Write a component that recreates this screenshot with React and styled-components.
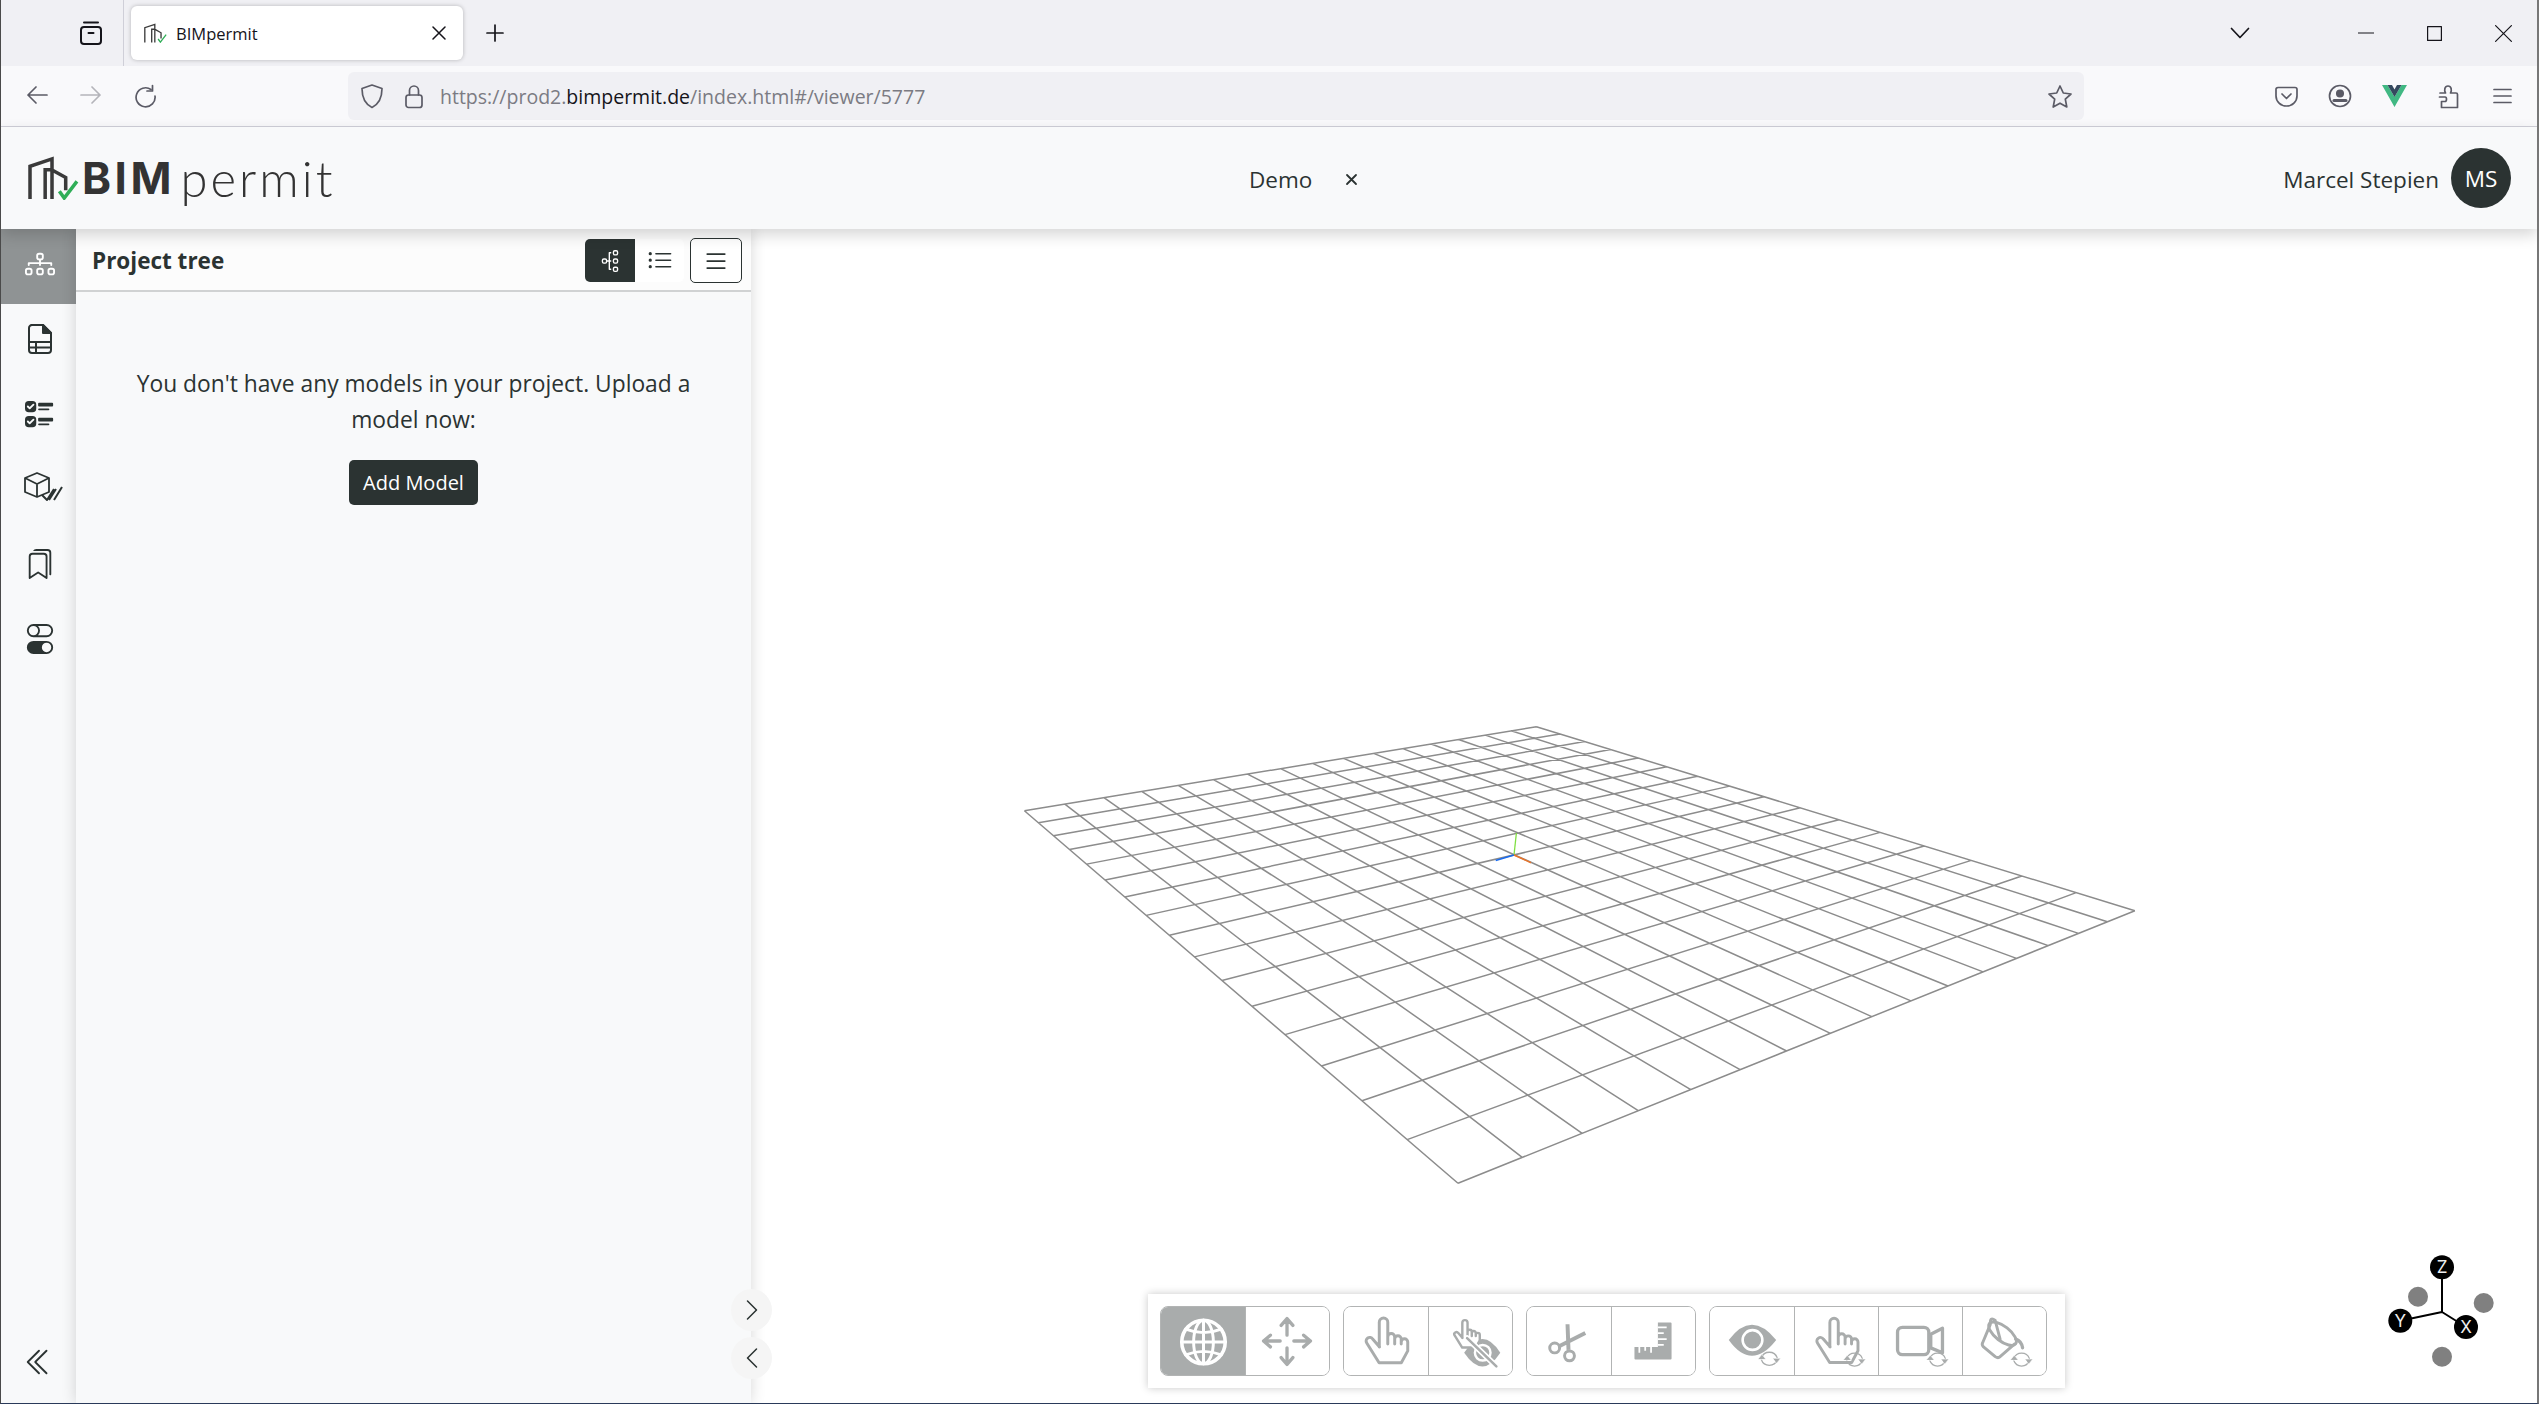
import React from "react";
import styled, { createGlobalStyle } from "styled-components";
import {
  BsDiagram3,
  BsUiChecks,
  BsBookmarks,
  BsToggles,
  BsListUl,
  BsList,
  BsChevronLeft,
  BsChevronRight,
  BsChevronDoubleLeft,
} from "react-icons/bs";

const GlobalStyle = createGlobalStyle`
  html, body {
    margin: 0;
    padding: 0;
    height: 100%;
    overflow: hidden;
    background: #2a3a5a;
  }
  * { box-sizing: border-box; }
`;

const DARK = "#2b3332";
const TOOL = "#a9acac";
const UI_FONT = `"Open Sans", "Noto Sans", sans-serif`;

const Frame = styled.div`
  width: 2539px;
  height: 1404px;
  display: flex;
  flex-direction: column;
  border-left: 1px solid #4a4a4a;
  border-right: 2px solid #777;
  border-bottom: 1px solid #2a3a5a;
  background: #fff;
  font-family: ${UI_FONT};
  color: ${DARK};
  overflow: hidden;
`;

/* browser chrome */
const TabStrip = styled.div`
  height: 66px;
  flex: none;
  display: flex;
  align-items: center;
  background: #f0f0f4;
  color: #15141a;
`;

const ViewSlot = styled.div`
  width: 123px;
  height: 66px;
  padding-left: 77px;
  display: flex;
  align-items: center;
  border-right: 1px solid #cfcfd8;
`;

const Tab = styled.div`
  width: 332px;
  height: 54px;
  margin-left: 7px;
  padding: 0 17px 0 12px;
  display: flex;
  align-items: center;
  background: #fff;
  border-radius: 6px;
  box-shadow: 0 0 4px rgba(0, 0, 0, 0.25);
  font-size: 16.5px;
`;

const TabTitle = styled.span`
  flex: 1;
  margin-left: 9px;
`;

const NewTab = styled.div`
  margin-left: 23px;
  display: flex;
`;

const Controls = styled.div`
  margin-left: auto;
  display: flex;
  align-items: center;
  padding-right: 25px;
`;

const Slot = styled.div`
  margin-left: ${(p) => p.$gap}px;
  display: flex;
`;

const NavBar = styled.div`
  height: 61px;
  flex: none;
  display: flex;
  align-items: center;
  background: #f9f9fb;
  border-bottom: 1px solid #cfcfd8;
`;

const NavIcons = styled.div`
  width: 347px;
  padding-left: 25px;
  display: flex;
  gap: 32px;
  color: #5b5b66;
`;

const UrlBar = styled.div`
  width: 1736px;
  height: 48px;
  padding: 0 11px 0 12px;
  display: flex;
  align-items: center;
  background: #f0f0f4;
  border-radius: 6px;
  color: #5b5b66;
`;

const UrlText = styled.div`
  flex: 1;
  margin-left: 16px;
  font-size: 19.5px;
  color: #7b7b83;
  b {
    font-weight: 400;
    color: #15141a;
  }
`;

const Addons = styled.div`
  flex: 1;
  display: flex;
  align-items: center;
  padding-left: 191px;
  gap: 30px;
  color: #5b5b66;
`;

/* app header */
const Header = styled.header`
  height: 102px;
  flex: none;
  display: grid;
  grid-template-columns: 1223px auto 1fr;
  align-items: center;
  padding: 0 26px 0 25px;
  background: #f8f9fa;
  box-shadow: 0 6px 14px rgba(0, 0, 0, 0.16);
  position: relative;
  z-index: 3;
`;

const Logo = styled.div`
  display: flex;
  align-items: center;
`;

const LogoBold = styled.span`
  margin-left: 3px;
  font-family: Inter, sans-serif;
  font-weight: 700;
  font-size: 44px;
  letter-spacing: 3.5px;
  color: #333;
`;

const LogoLight = styled.span`
  margin-left: 5.5px;
  font-family: Lato, sans-serif;
  font-weight: 300;
  font-size: 49px;
  letter-spacing: 3px;
  color: #333;
`;

const ProjectTag = styled.div`
  display: flex;
  align-items: center;
  gap: 33px;
  font-size: 22.5px;
  padding-top: 2px;
`;

const UserBox = styled.div`
  display: flex;
  justify-content: flex-end;
  align-items: center;
  gap: 12px;
  font-size: 22.5px;
`;

const UserName = styled.span`
  padding-top: 2px;
`;

const Avatar = styled.div`
  width: 60px;
  height: 60px;
  display: flex;
  align-items: center;
  justify-content: center;
  border-radius: 50%;
  background: ${DARK};
  color: #fff;
`;

/* app body */
const Main = styled.main`
  flex: 1;
  min-height: 0;
  display: flex;
`;

const Sidebar = styled.nav`
  width: 75px;
  flex: none;
  display: flex;
  flex-direction: column;
  padding-bottom: 4px;
  background: #f8f9fa;
`;

const SideItem = styled.div`
  height: 75px;
  flex: none;
  display: flex;
  align-items: center;
  justify-content: center;
  padding: 0 0 5px 3px;
  background: ${(p) => (p.$active ? "#8f9394" : "transparent")};
  color: ${(p) => (p.$active ? "#fff" : DARK)};
`;

const CollapseItem = styled.div`
  height: 75px;
  flex: none;
  margin-top: auto;
  display: flex;
  align-items: center;
  justify-content: center;
  color: ${DARK};
`;

const Panel = styled.section`
  width: 675px;
  flex: none;
  display: flex;
  flex-direction: column;
  background: #f8f9fa;
  box-shadow: 0 0 14px rgba(0, 0, 0, 0.16);
  position: relative;
  z-index: 2;
`;

const PanelHead = styled.div`
  height: 63px;
  flex: none;
  display: flex;
  align-items: center;
  padding: 2px 9px 0 16px;
  background: #fcfcfc;
  border-bottom: 2px solid #d0d2d3;
`;

const PanelTitle = styled.h2`
  flex: 1;
  margin: 0;
  font-size: 22.5px;
  font-weight: 700;
`;

const ViewSwitch = styled.div`
  display: flex;
  margin-right: 6px;
`;

const SwitchBtn = styled.button`
  width: ${(p) => (p.$active ? "50px" : "49px")};
  height: 43px;
  padding: 0;
  display: flex;
  align-items: center;
  justify-content: center;
  border: 0;
  border-radius: ${(p) => (p.$active ? "5px 0 0 5px" : "0 5px 5px 0")};
  background: ${(p) => (p.$active ? DARK : "#fff")};
  color: ${(p) => (p.$active ? "#fff" : DARK)};
`;

const RotatedIcon = styled.span`
  display: flex;
  transform: rotate(-90deg);
`;

const MenuBtn = styled.button`
  width: 52px;
  height: 45px;
  padding: 0;
  display: flex;
  align-items: center;
  justify-content: center;
  border: 1px solid ${DARK};
  border-radius: 5px;
  background: #fff;
  color: ${DARK};
`;

const PanelBody = styled.div`
  flex: 1;
  padding: 74px 56px 0;
  display: flex;
  flex-direction: column;
  align-items: center;
  text-align: center;
  font-size: 22.8px;
  line-height: 36px;
`;

const AddButton = styled.button`
  width: 129px;
  height: 45px;
  margin-top: 22px;
  padding: 0;
  border: 0;
  border-radius: 5px;
  background: ${DARK};
  color: #fff;
  font-family: inherit;
  font-size: 20px;
`;

const PanelToggles = styled.div`
  position: absolute;
  right: -21px;
  bottom: 24px;
  display: flex;
  flex-direction: column;
  gap: 6px;
`;

const RoundBtn = styled.button`
  width: 41px;
  height: 42px;
  padding: 0;
  display: flex;
  align-items: center;
  justify-content: center;
  border: 0;
  border-radius: 50%;
  background: #f5f5f5;
  color: ${DARK};
`;

const Viewer = styled.div`
  flex: 1;
  min-width: 0;
  position: relative;
  background: #fff;
  overflow: hidden;
`;

const SceneSvg = styled.svg`
  display: block;
`;

const ToolDock = styled.div`
  position: absolute;
  left: 397px;
  bottom: 15px;
  display: flex;
  gap: 13px;
  padding: 12px 18px 12px 12px;
  background: #fff;
  box-shadow: 0 0 8px rgba(0, 0, 0, 0.22);
`;

const ToolGroup = styled.div`
  display: flex;
  height: 70px;
  border: 1px solid #b2b4b4;
  border-radius: 8px;
  overflow: hidden;
`;

const ToolBtn = styled.div`
  width: 84px;
  height: 100%;
  display: flex;
  justify-content: center;
  background: ${(p) => (p.$active ? TOOL : "#fff")};
  color: ${(p) => (p.$active ? "#fff" : TOOL)};
  & + & {
    border-left: 1px solid #b2b4b4;
  }
`;

const GizmoBox = styled.svg`
  position: absolute;
  right: 32px;
  bottom: 31px;
`;

/* ---- drawings ---- */

function BuildingMark({ height = 44, check = "#2fae57", stroke = 3.6 }) {
  return (
    <svg width={(height * 53) / 44} height={height} viewBox="26 151 54 45">
      <path
        d="M30 195V161.5L52.5 154V195M45.5 195V165H52.5M53 165.5L66.5 173V186"
        fill="none"
        stroke="#3a3a3a"
        strokeWidth={stroke}
      />
      <path d="M60 187L65 194L78 177" fill="none" stroke={check} strokeWidth={stroke} />
    </svg>
  );
}

const line = { fill: "none", stroke: "currentColor", strokeLinecap: "round", strokeLinejoin: "round" };

function Glyph({ w, h, sw = 1.7, children }) {
  return (
    <svg width={w} height={h} viewBox={`0 0 ${w} ${h}`} {...line} strokeWidth={sw}>
      {children}
    </svg>
  );
}

const HAND =
  "M36 40L29 32a3.6 3.6 0 0 0-6 4L35.5 56H58L64.5 44V35a3.3 3.3 0 0 0-6.6 0V37M57.9 35V32a3.3 3.3 0 0 0-6.6 0V37M51.3 32V30a3.3 3.3 0 0 0-7 0V37M44.3 30V15a4.3 4.3 0 0 0-8.6 0V40";

function Sync({ x = 61, y = 53 }) {
  return (
    <g transform={`translate(${x} ${y})`}>
      <path d="M-8 -1A8.5 8.5 0 0 1 8 -1M8 1A8.5 8.5 0 0 1-8 1" fill="none" stroke="currentColor" strokeWidth="1.3" />
      <path d="M-11.5 0.5L-7.5 -4.5L-3.5 0.5ZM3.5 -0.5L11.5 -0.5L7.5 4.5Z" fill="currentColor" stroke="#fff" strokeWidth="0.6" />
    </g>
  );
}

function ToolIcon({ children }) {
  return (
    <svg width="85" height="70" viewBox="0 0 85 70" fill="none" stroke="currentColor" strokeWidth="3" strokeLinecap="round" strokeLinejoin="round">
      {children}
    </svg>
  );
}

const GlobeIcon = () => (
  <ToolIcon>
    <circle cx="43" cy="35" r="22" strokeWidth="3.6" />
    <ellipse cx="43" cy="35" rx="10" ry="22" strokeWidth="3" />
    <path d="M43 13V57M21 35H65M25 22Q43 29 61 22M25 48Q43 41 61 48" strokeWidth="3" />
  </ToolIcon>
);

const MoveIcon = () => (
  <ToolIcon>
    <path d="M42 12V28M36 18L42 11L48 18M42 41V57M36 51L42 58L48 51M18 34H35M25 28L18 34L25 40M49 34H66M59 28L66 34L59 40" strokeWidth="3.4" />
  </ToolIcon>
);

const HandIcon = () => (
  <ToolIcon>
    <path d={HAND} />
  </ToolIcon>
);

const HandHideIcon = () => (
  <ToolIcon>
    <path d="M36 46Q55 18 73 46Q55 74 36 46Z" fill="currentColor" stroke="none" />
    <circle cx="55" cy="46" r="8" fill="none" stroke="#fff" strokeWidth="2.5" />
    <g transform="translate(12 6) scale(.62)">
      <path d={HAND} strokeWidth="4" fill="#fff" />
    </g>
    <path d="M39 31L69 60" stroke="#fff" strokeWidth="6" />
    <path d="M39 31L69 60" strokeWidth="2.6" />
  </ToolIcon>
);

const ScissorsIcon = () => (
  <ToolIcon>
    <circle cx="28" cy="41" r="5" />
    <circle cx="43" cy="49" r="5" />
    <path d="M33 39L59 26M41 17L42 43" strokeWidth="4" strokeLinecap="butt" />
  </ToolIcon>
);

const RulerIcon = () => (
  <ToolIcon>
    <path d="M47 15H60a1 1 0 0 1 1 1V52a1 1 0 0 1-1 1H24a1 1 0 0 1-1-1V40H47Z" fill="currentColor" stroke="none" />
    <path d="M47 20H56M47 26H53M47 32H56M47 38H53M28 40V46M34 40V44M40 40V46" stroke="#fff" strokeWidth="1.8" strokeLinecap="butt" />
  </ToolIcon>
);

const EyeSyncIcon = () => (
  <ToolIcon>
    <path d="M19 33Q42 2 67 33Q42 65 19 33Z" fill="currentColor" stroke="none" />
    <circle cx="43" cy="33" r="10" fill="currentColor" stroke="#fff" strokeWidth="2.6" />
    <Sync x={60} y={52} />
  </ToolIcon>
);

const HandSyncIcon = () => (
  <ToolIcon>
    <path d={HAND} />
    <Sync x={61} y={53} />
  </ToolIcon>
);

const CameraSyncIcon = () => (
  <ToolIcon>
    <rect x="19" y="20" width="32" height="28" rx="5" strokeWidth="3.4" />
    <path d="M53 27L65 21V46L53 41Z" strokeWidth="3.4" />
    <Sync x={60} y={53} />
  </ToolIcon>
);

const BucketSyncIcon = () => (
  <ToolIcon>
    <ellipse cx="40.5" cy="26.5" rx="17" ry="7.5" transform="rotate(38 40.5 26.5)" strokeWidth="3" />
    <path d="M28 17L20 36Q19 38 21 40L33 50Q36 52 38 50L53 37" strokeWidth="3" />
    <path d="M28 15Q28 9 33 13L38 32" strokeWidth="3" />
    <path d="M54 32Q60 34 61 41" strokeWidth="3.4" />
    <Sync x={60} y={53} />
  </ToolIcon>
);

const SheetIcon = () => (
  <svg width="30" height="30" viewBox="0 0 30 30" fill="none" stroke="currentColor" strokeWidth="2" strokeLinejoin="round">
    <path d="M7.5 1H18L26 9V26A3 3 0 0 1 23 29H7A3 3 0 0 1 4 26V4A3 3 0 0 1 7.5 1Z" />
    <path d="M18 1V9H26Z" fill="currentColor" />
    <path d="M4 18H26M4 23.5H26M11 18V29" />
  </svg>
);

const CubeChecksIcon = () => (
  <svg width="54" height="34" viewBox="-11 0 54 34" fill="none" stroke="currentColor" strokeWidth="1.8" strokeLinejoin="round">
    <path d="M13 1L25 6V20L13 25L1 20V6Z" />
    <path d="M1 6L13 12L25 6M13 12V25" />
    <path d="M18 23L23 28L30 17M25 28L32 17M30 28L38 15" strokeWidth="2" />
  </svg>
);

/* ---- viewer scene ---- */

const QUAD = [
  [1536.4, 726.7],
  [2134.9, 910.7],
  [1458, 1183.3],
  [1024.4, 810.7],
];

function makeProjector([[x0, y0], [x1, y1], [x2, y2], [x3, y3]]) {
  const dx1 = x1 - x2;
  const dx2 = x3 - x2;
  const sx = x0 - x1 + x2 - x3;
  const dy1 = y1 - y2;
  const dy2 = y3 - y2;
  const sy = y0 - y1 + y2 - y3;
  const det = dx1 * dy2 - dx2 * dy1;
  const g = (sx * dy2 - dx2 * sy) / det;
  const h = (dx1 * sy - sx * dy1) / det;
  const a = x1 - x0 + g * x1;
  const b = x3 - x0 + h * x3;
  const d = y1 - y0 + g * y1;
  const e = y3 - y0 + h * y3;
  return (u, v) => {
    const w = g * u + h * v + 1;
    return [(a * u + b * v + x0) / w, (d * u + e * v + y0) / w];
  };
}

const CELLS = 16;

function gridPath() {
  const project = makeProjector(QUAD);
  let out = "";
  for (let i = 0; i <= CELLS; i++) {
    const t = i / CELLS;
    const [ax, ay] = project(t, 0);
    const [bx, by] = project(t, 1);
    const [cx, cy] = project(0, t);
    const [dx, dy] = project(1, t);
    out += `M${ax} ${ay}L${bx} ${by}M${cx} ${cy}L${dx} ${dy}`;
  }
  return out;
}

function Scene() {
  return (
    <SceneSvg width="1787" height="1174" viewBox="751 229 1787 1174">
      <path d={gridPath()} fill="none" stroke="#8c8c8c" strokeWidth="1.5" />
      <path d="M1514 855L1516.4 833" stroke="#7fe040" strokeWidth="1.3" />
      <path d="M1514 855L1495.7 860.5" stroke="#1a6cf0" strokeWidth="1.6" />
      <path d="M1514 855L1531 862.7" stroke="#e8742a" strokeWidth="1.5" />
    </SceneSvg>
  );
}

function GizmoBall({ x, y, label }) {
  return (
    <g>
      <circle cx={x} cy={y} r="12" fill="#000" />
      <text x={x} y={y + 6} textAnchor="middle" fontSize="17" fontFamily="Inter, sans-serif" fill="#eee">
        {label}
      </text>
    </g>
  );
}

function Gizmo() {
  return (
    <GizmoBox width="120" height="122" viewBox="2385 1250 120 122">
      <path d="M2442 1312V1270M2442 1312L2404 1320M2442 1312L2466 1327" stroke="#000" strokeWidth="2" fill="none" />
      <circle cx="2418" cy="1296.7" r="10" fill="#808080" />
      <circle cx="2483.7" cy="1303" r="10" fill="#808080" />
      <circle cx="2442" cy="1356.7" r="10" fill="#808080" />
      <GizmoBall x={2442} y={1267.3} label="Z" />
      <GizmoBall x={2400.3} y={1320.7} label="Y" />
      <GizmoBall x={2466} y={1327} label="X" />
    </GizmoBox>
  );
}

const TOOL_GROUPS = [
  [GlobeIcon, MoveIcon],
  [HandIcon, HandHideIcon],
  [ScissorsIcon, RulerIcon],
  [EyeSyncIcon, HandSyncIcon, CameraSyncIcon, BucketSyncIcon],
];

export default function App() {
  return (
    <>
      <GlobalStyle />
      <Frame>
        <TabStrip>
          <ViewSlot>
            <Glyph w={26} h={26} sw={2}>
              <rect x="3" y="7" width="20" height="17" rx="3" />
              <path d="M6 2.5H20M10.5 13H15.5" />
            </Glyph>
          </ViewSlot>
          <Tab>
            <BuildingMark height={20} stroke={3} />
            <TabTitle>BIMpermit</TabTitle>
            <Glyph w={14} h={14} sw={1.5}>
              <path d="M1 1L13 13M13 1L1 13" />
            </Glyph>
          </Tab>
          <NewTab>
            <Glyph w={18} h={18} sw={1.7}>
              <path d="M9 1V17M1 9H17" />
            </Glyph>
          </NewTab>
          <Controls>
            <Glyph w={20} h={12} sw={1.7}>
              <path d="M1.5 1.5L10 10.5L18.5 1.5" />
            </Glyph>
            <Slot $gap={108}>
              <Glyph w={16} h={2} sw={1.2}>
                <path d="M0 1H16" />
              </Glyph>
            </Slot>
            <Slot $gap={53}>
              <Glyph w={15} h={15} sw={1.2}>
                <rect x="0.6" y="0.6" width="13.8" height="13.8" />
              </Glyph>
            </Slot>
            <Slot $gap={53}>
              <Glyph w={17} h={17} sw={1.2}>
                <path d="M.6 .6L16.4 16.4M16.4 .6L.6 16.4" />
              </Glyph>
            </Slot>
          </Controls>
        </TabStrip>

        <NavBar>
          <NavIcons>
            <Glyph w={22} h={22}>
              <path d="M21 11H2M10 3L2 11L10 19" />
            </Glyph>
            <Glyph w={22} h={22}>
              <path d="M1 11H20M12 3L20 11L12 19" stroke="#b4b4ba" />
            </Glyph>
            <Glyph w={23} h={24}>
              <path d="M17 5.5A9.5 9.5 0 1 0 21 12" />
              <path d="M18.5 1.5V7H13" />
            </Glyph>
          </NavIcons>
          <UrlBar>
            <Glyph w={24} h={26}>
              <path d="M12 2L22 5.5C22 15 19 21 12 24.5C5 21 2 15 2 5.5Z" />
            </Glyph>
            <Slot $gap={20}>
              <Glyph w={20} h={25}>
                <rect x="2" y="11" width="16" height="12.5" rx="2.5" />
                <path d="M5.5 11V6.5A4.5 4.5 0 0 1 14.5 6.5V11" />
              </Glyph>
            </Slot>
            <UrlText>
              https://prod2.<b>bimpermit.de</b>/index.html#/viewer/5777
            </UrlText>
            <Glyph w={26} h={25}>
              <path d="M13 2L16.3 9L24 10L18.3 15.2L19.8 23L13 19.2L6.2 23L7.7 15.2L2 10L9.7 9Z" />
            </Glyph>
          </UrlBar>
          <Addons>
            <Glyph w={23} h={21}>
              <path d="M3 1.5H20A2 2 0 0 1 22 3.5V10A10.5 10 0 0 1 1 10V3.5A2 2 0 0 1 3 1.5Z" />
              <path d="M7 8L11.5 12.5L16 8" />
            </Glyph>
            <Glyph w={24} h={24}>
              <circle cx="12" cy="12" r="10.5" />
              <circle cx="12" cy="9.5" r="3.2" fill="currentColor" />
              <path d="M6 16.5H18" strokeWidth="3" />
            </Glyph>
            <svg width="25" height="22" viewBox="0 0 25 22">
              <path d="M0 0H5.5L12.5 12L19.5 0H25L12.5 22Z" fill="#41b883" />
              <path d="M5.5 0H10L12.5 4.5L15 0H19.5L12.5 12Z" fill="#35495e" />
            </svg>
            <Glyph w={22} h={25}>
              <path d="M3 9H8.5C7 6.5 7.5 2 11 2S15 6.5 13.5 9H19A1.5 1.5 0 0 1 20.5 10.5V23.5H4.5V17.5H8C10 17.5 10 13 8 13H2.5" />
            </Glyph>
            <Slot $gap={4}>
              <Glyph w={19} h={16}>
                <path d="M1 1.5H18M1 8H18M1 14.5H18" />
              </Glyph>
            </Slot>
          </Addons>
        </NavBar>

        <Header>
          <Logo>
            <BuildingMark />
            <LogoBold>BIM</LogoBold>
            <LogoLight>permit</LogoLight>
          </Logo>
          <ProjectTag>
            <span>Demo</span>
            <Glyph w={13} h={13} sw={1.8}>
              <path d="M2 2L11 11M11 2L2 11" />
            </Glyph>
          </ProjectTag>
          <UserBox>
            <UserName>Marcel Stepien</UserName>
            <Avatar>MS</Avatar>
          </UserBox>
        </Header>

        <Main>
          <Sidebar>
            <SideItem $active>
              <BsDiagram3 size={30} />
            </SideItem>
            <SideItem>
              <SheetIcon />
            </SideItem>
            <SideItem>
              <BsUiChecks size={30} />
            </SideItem>
            <SideItem>
              <CubeChecksIcon />
            </SideItem>
            <SideItem>
              <BsBookmarks size={30} />
            </SideItem>
            <SideItem>
              <BsToggles size={30} />
            </SideItem>
            <CollapseItem>
              <BsChevronDoubleLeft size={30} />
            </CollapseItem>
          </Sidebar>

          <Panel>
            <PanelHead>
              <PanelTitle>Project tree</PanelTitle>
              <ViewSwitch>
                <SwitchBtn $active>
                  <RotatedIcon>
                    <BsDiagram3 size={22} />
                  </RotatedIcon>
                </SwitchBtn>
                <SwitchBtn>
                  <BsListUl size={26} />
                </SwitchBtn>
              </ViewSwitch>
              <MenuBtn>
                <BsList size={28} />
              </MenuBtn>
            </PanelHead>
            <PanelBody>
              You don't have any models in your project. Upload a model now:
              <AddButton>Add Model</AddButton>
            </PanelBody>
            <PanelToggles>
              <RoundBtn>
                <BsChevronRight size={24} />
              </RoundBtn>
              <RoundBtn>
                <BsChevronLeft size={24} />
              </RoundBtn>
            </PanelToggles>
          </Panel>

          <Viewer>
            <Scene />
            <Gizmo />
            <ToolDock>
              {TOOL_GROUPS.map((group, i) => (
                <ToolGroup key={i}>
                  {group.map((Icon, j) => (
                    <ToolBtn key={j} $active={i === 0 && j === 0}>
                      <Icon />
                    </ToolBtn>
                  ))}
                </ToolGroup>
              ))}
            </ToolDock>
          </Viewer>
        </Main>
      </Frame>
    </>
  );
}
